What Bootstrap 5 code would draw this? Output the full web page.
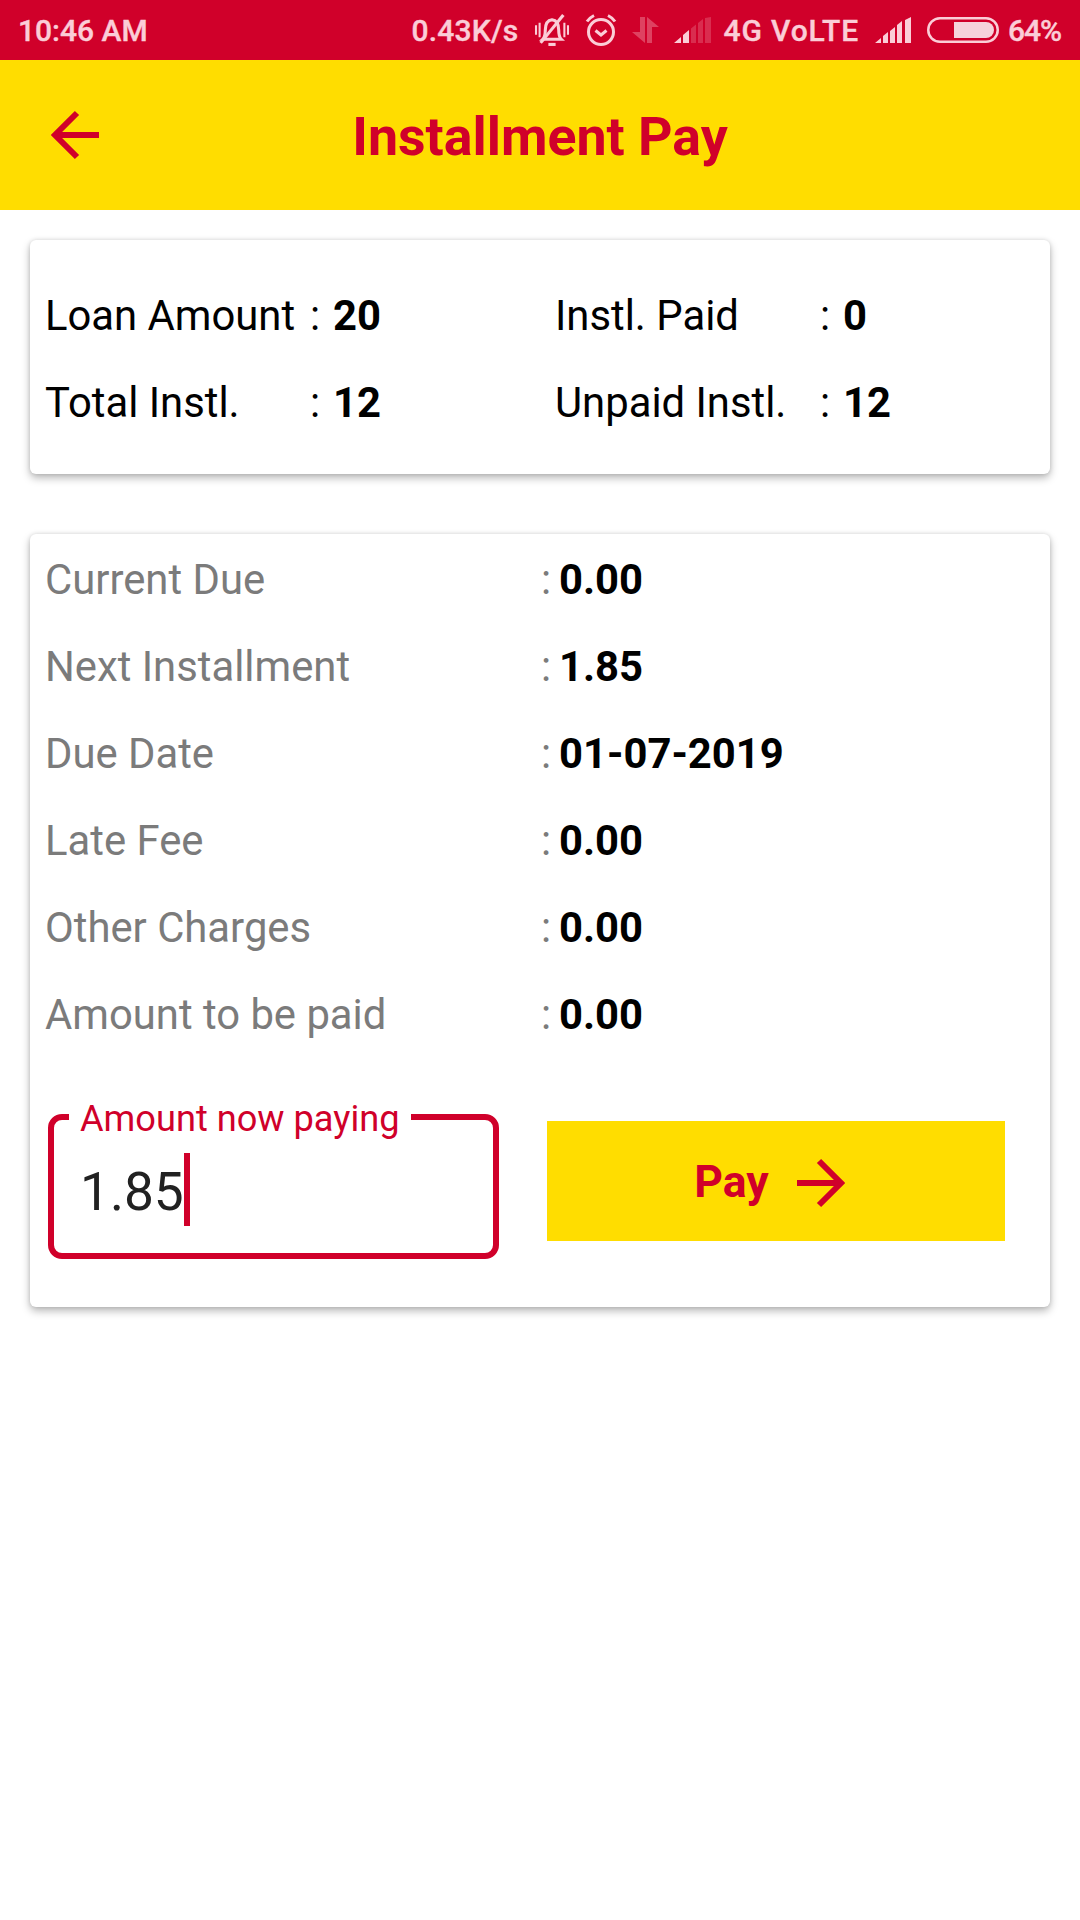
<!DOCTYPE html>
<html lang="en">
<head>
<meta charset="utf-8">
<title>Installment Pay</title>
<link href="https://cdn.jsdelivr.net/npm/bootstrap@5.3.0/dist/css/bootstrap.min.css" rel="stylesheet">
<style>
body{font-family:Roboto,"Liberation Sans",sans-serif;background:#fff;color:#000;width:1080px;min-height:1920px}
.sbar{height:60px;background:#d0002a;color:#fbcdd7;font-weight:500;font-size:30px;line-height:60px;padding:0 19px 0 18px}
.sbar svg{display:block;flex:none}
.sbar span{padding-top:2px;-webkit-text-stroke:.4px #fbcdd7}
.sb-speed{margin-right:16px;letter-spacing:.2px}
.sb-alarm{margin-left:15px}
.sb-data{margin-left:15px}
.sb-sig1{margin-left:15px}
.sb-net{margin-left:12px;letter-spacing:.9px}
.sb-sig2{margin-left:16px}
.sb-batt{margin-left:15px}
.sb-pct{margin-left:9px;letter-spacing:-1.1px}
.hdr{height:150px;background:#ffdd00;padding-left:50px;padding-right:50px}
.hdr-slot{width:53px;flex:none}
.hdr-title{color:#d0002a;font-weight:700;font-size:53.7px;line-height:1;margin:4px 0 0}
.inf-card{margin:30px 30px 0;border:0;border-radius:6px;box-shadow:0 4px 8px rgba(0,0,0,.28),0 0 4px rgba(0,0,0,.12);background:#fff}
.inf-top{padding:32px 2px 28px 15px;height:234px}
.inf-grid{display:grid;grid-template-columns:510px 1fr}
.inf-main{margin-top:60px;padding:2px 0 0 15px;height:773px}
.inf-row{height:87px;font-size:41.8px;line-height:87px}
.lab-a{width:265px;flex:none}
.colon-a{width:23px;flex:none}
.lab-b{width:496px;flex:none;color:#7b7b7b}
.colon-b{width:18px;flex:none;color:#7b7b7b}
.val{font-weight:700}
.pay-zone{margin:56px 0 0 3px}
.amt-box{position:relative;width:451px;height:145px;border:6px solid #d0002a;border-radius:14px}
.amt-label{position:absolute;left:15px;top:-22px;padding:0 11px 0 11px;background:#fff;color:#d0002a;font-size:36.200px;line-height:42px;white-space:nowrap}
.amt-val{position:absolute;left:26px;top:33px;height:73px;font-size:53.200px;line-height:78px;color:#212121;display:flex}
.amt-caret{display:block;width:6px;height:73px;background:#d0002a}
.pay-btn{width:458px;height:120px;margin:7px 0 0 48px;background:#ffdd00;color:#d0002a;border:0;border-radius:0;font-weight:700;font-size:44.500px;padding:0 12px 0 0;gap:27px}
.pay-btn:hover,.pay-btn:active{background:#ffdd00;color:#d0002a}
.pay-btn svg{margin-top:3px}
.pay-btn span{margin-top:3px}
</style>
</head>
<body>
<div class="sbar d-flex align-items-center">
  <span>10:46 AM</span>
  <div class="ms-auto d-flex align-items-center">
    <span class="sb-speed">0.43K/s</span>
    <svg width="36" height="33" viewBox="0 0 34 32" fill="none" stroke="#fbcdd7" stroke-width="3" aria-hidden="true">
      <path d="M8 24.500c2-2 2.500-4 2.500-9C10.500 9.500 13 6 17 5.500c4 .5 6.500 4 6.500 10 0 5 .5 7 2.500 9z"/>
      <path d="M28 1 6 28" stroke-width="3"/>
      <path d="M1.500 11v9M5 8.500v14M29 8.500v14M32.500 11v9" stroke-width="2"/>
      <path d="M13.500 29.500h7" stroke-width="3"/>
    </svg>
    <svg class="sb-alarm" width="32" height="32" viewBox="0 0 32 32" fill="none" stroke="#fbcdd7" stroke-width="3" aria-hidden="true">
      <circle cx="16" cy="18" r="12.500"/>
      <path d="M10.500 16.500 16 21l5.500-4.500"/>
      <path d="M2 7.500C4 4.500 6 3 9 1.500M30 7.500C28 4.500 26 3 23 1.500"/>
    </svg>
    <svg class="sb-data" width="27" height="26" viewBox="0 0 27 26" aria-hidden="true">
      <path d="M8 0h5v26L0 15h8z" fill="#fbcdd7" opacity=".32"/>
      <path d="M15 0l12 10h-7v16h-5z" fill="#fbcdd7" opacity=".32"/>
    </svg>
    <svg class="sb-sig1" width="37" height="26" viewBox="0 0 37 26" aria-hidden="true">
      <path d="M0 26l7-6v6zM9 18l6-5v13H9z" fill="#fbcdd7"/>
      <path d="M17 11.500l5-4V26h-5zM24 6l5-4v24h-5zM31 1l6-1v26h-6z" fill="#fbcdd7" opacity=".22"/>
    </svg>
    <span class="sb-net">4G VoLTE</span>
    <svg class="sb-sig2" width="37" height="26" viewBox="0 0 37 26" aria-hidden="true">
      <path d="M0 26l6-5v5zM8 19l5-4v11H8zM15 14l5-4v16h-5zM22 8l5-4v22h-5zM30 3l6-3v26h-6z" fill="#fbcdd7"/>
    </svg>
    <svg class="sb-batt" width="72" height="26" viewBox="0 0 72 26" aria-hidden="true">
      <rect x="1.250" y="1.250" width="69.500" height="23.500" rx="11.750" fill="none" stroke="#fbcdd7" stroke-width="2.500"/>
      <path d="M27 5h32a8 8 0 0 1 8 8 8 8 0 0 1-8 8H27z" fill="#f6d3dc"/>
    </svg>
    <span class="sb-pct">64%</span>
  </div>
</div>

<header class="hdr d-flex align-items-center">
  <div class="hdr-slot">
    <svg class="d-block" width="50" height="50" viewBox="0 0 50 50" fill="none" stroke="#d0002a" stroke-width="6" aria-hidden="true">
      <path d="M49 25H6M27 3 5 25l22 22"/>
    </svg>
  </div>
  <h1 class="hdr-title flex-grow-1 text-center">Installment Pay</h1>
  <div class="hdr-slot"></div>
</header>

<main>
  <section class="card inf-card inf-top">
    <div class="inf-grid">
      <div class="d-flex inf-row"><span class="lab-a">Loan Amount</span><span class="colon-a">:</span><span class="val">20</span></div>
      <div class="d-flex inf-row"><span class="lab-a">Instl. Paid</span><span class="colon-a">:</span><span class="val">0</span></div>
      <div class="d-flex inf-row"><span class="lab-a">Total Instl.</span><span class="colon-a">:</span><span class="val">12</span></div>
      <div class="d-flex inf-row"><span class="lab-a">Unpaid Instl.</span><span class="colon-a">:</span><span class="val">12</span></div>
    </div>
  </section>

  <section class="card inf-card inf-main">
    <div class="d-flex inf-row"><span class="lab-b">Current Due</span><span class="colon-b">:</span><span class="val">0.00</span></div>
    <div class="d-flex inf-row"><span class="lab-b">Next Installment</span><span class="colon-b">:</span><span class="val">1.85</span></div>
    <div class="d-flex inf-row"><span class="lab-b">Due Date</span><span class="colon-b">:</span><span class="val">01-07-2019</span></div>
    <div class="d-flex inf-row"><span class="lab-b">Late Fee</span><span class="colon-b">:</span><span class="val">0.00</span></div>
    <div class="d-flex inf-row"><span class="lab-b">Other Charges</span><span class="colon-b">:</span><span class="val">0.00</span></div>
    <div class="d-flex inf-row"><span class="lab-b">Amount to be paid</span><span class="colon-b">:</span><span class="val">0.00</span></div>
    <div class="d-flex align-items-start pay-zone">
      <div class="amt-box">
        <span class="amt-label">Amount now paying</span>
        <div class="amt-val"><span>1.85</span><span class="amt-caret"></span></div>
      </div>
      <button type="button" class="btn pay-btn d-flex align-items-center justify-content-center">
        <span>Pay</span>
        <svg width="50" height="50" viewBox="0 0 50 50" fill="none" stroke="#d0002a" stroke-width="6" aria-hidden="true">
          <path d="M1 25h43M23 3l22 22-22 22"/>
        </svg>
      </button>
    </div>
  </section>
</main>
<script src="https://cdn.jsdelivr.net/npm/bootstrap@5.3.0/dist/js/bootstrap.bundle.min.js"></script>
</body>
</html>
